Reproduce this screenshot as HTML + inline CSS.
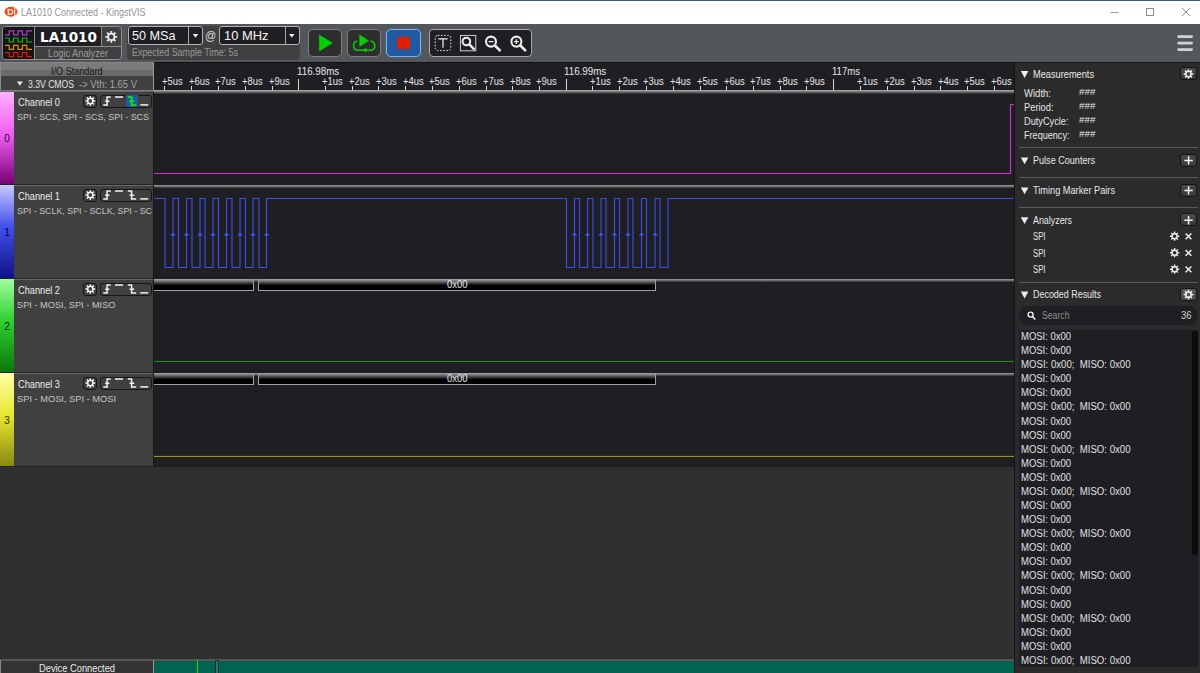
<!DOCTYPE html>
<html lang="en"><head><meta charset="utf-8"><title>LA1010 Connected - KingstVIS</title>
<style>
html,body{margin:0;padding:0;background:#303030;}
#app{position:relative;width:1200px;height:673px;overflow:hidden;background:#303030;}
.r{position:absolute;}
.t{position:absolute;white-space:pre;transform-origin:0 50%;}
#ov{position:absolute;left:0;top:0;width:1200px;height:673px;pointer-events:none;}
</style></head>
<body><div id="app">
<div class="r" style="left:0px;top:0px;width:1200px;height:24px;background:#ffffff;"></div>
<div class="r" style="left:0px;top:0px;width:1200px;height:1px;background:#315d86;"></div>
<span class="t" style="left:21.00px;top:6.20px;font:normal 10.4px/14px 'Liberation Sans', sans-serif;color:#949494;transform:scaleX(0.8655);">LA1010 Connected - KingstVIS</span>
<div class="r" style="left:0px;top:24px;width:1200px;height:38px;background:#53565a;"></div>
<div class="r" style="left:2px;top:26px;width:120px;height:34px;background:#404040;border:1px solid #8e8e8e;border-radius:4px;box-sizing:border-box;"></div>
<div class="r" style="left:3px;top:27px;width:31px;height:32px;background:#151515;border-radius:3px 0 0 3px;"></div>
<div class="r" style="left:35px;top:27px;width:66px;height:19px;background:#1f1e23;"></div>
<div class="r" style="left:34px;top:27px;width:1px;height:32px;background:#8e8e8e;"></div>
<div class="r" style="left:101px;top:27px;width:1px;height:19px;background:#8e8e8e;"></div>
<div class="r" style="left:35px;top:46px;width:86px;height:1px;background:#8e8e8e;"></div>
<span class="t" style="left:39.80px;top:28.20px;font:bold 13.8px/18px 'DejaVu Sans', sans-serif;color:#ffffff;transform:scaleX(0.9849);">LA1010</span>
<span class="t" style="left:48.00px;top:46.20px;font:normal 10.6px/14px 'Liberation Sans', sans-serif;color:#9c9c9c;transform:scaleX(0.8707);">Logic Analyzer</span>
<div class="r" style="left:127px;top:26px;width:173px;height:34px;background:#404040;border-radius:4px;"></div>
<div class="r" style="left:127.5px;top:26px;width:75.5px;height:18.5px;background:#1f1e23;border:1px solid #b2b2b2;border-radius:3px;box-sizing:border-box;"></div>
<div class="r" style="left:188px;top:27px;width:1px;height:16.5px;background:#a8a8a8;"></div>
<div class="r" style="left:219px;top:26px;width:81px;height:18.5px;background:#1f1e23;border:1px solid #b2b2b2;border-radius:3px;box-sizing:border-box;"></div>
<div class="r" style="left:285px;top:27px;width:1px;height:16.5px;background:#a8a8a8;"></div>
<span class="t" style="left:132.20px;top:27.70px;font:normal 12.2px/16px 'Liberation Sans', sans-serif;color:#f4f4f4;transform:scaleX(1.0353);">50 MSa</span>
<span class="t" style="left:224.00px;top:27.70px;font:normal 12.2px/16px 'Liberation Sans', sans-serif;color:#f4f4f4;transform:scaleX(1.0595);">10 MHz</span>
<span class="t" style="left:205.30px;top:27.60px;font:normal 12.6px/16px 'Liberation Sans', sans-serif;color:#d4d6de;transform:scaleX(0.8752);">@</span>
<span class="t" style="left:131.90px;top:46.40px;font:normal 10.3px/13px 'Liberation Sans', sans-serif;color:#9a9a9a;transform:scaleX(0.8654);">Expected Sample Time: 5s</span>
<div class="r" style="left:308px;top:29px;width:34px;height:28px;background:#2e2e2e;border:1px solid #7e7e7e;border-radius:5px;box-sizing:border-box;"></div>
<div class="r" style="left:347px;top:29px;width:34px;height:28px;background:#2e2e2e;border:1px solid #7e7e7e;border-radius:5px;box-sizing:border-box;"></div>
<div class="r" style="left:386px;top:29px;width:35px;height:28px;background:#1f5aa2;border:1px solid #8fb0d2;border-radius:5px;box-sizing:border-box;box-shadow:0 0 2px 1px rgba(50,120,190,.45);"></div>
<div class="r" style="left:397.3px;top:37.2px;width:12.7px;height:11.8px;background:#e02000;"></div>
<div class="r" style="left:429px;top:29px;width:103px;height:28px;background:#1f1e23;border:1px solid #a8a8a8;border-radius:4px;box-sizing:border-box;"></div>
<div class="r" style="left:0px;top:62px;width:1014px;height:598px;background:#303030;"></div>
<div class="r" style="left:154px;top:62px;width:860px;height:405px;background:#1f1e23;"></div>
<div class="r" style="left:0px;top:62px;width:154px;height:1px;background:#858585;"></div>
<div class="r" style="left:0px;top:63px;width:154px;height:7px;background:#7b7b7b;"></div>
<div class="r" style="left:0px;top:70px;width:154px;height:6px;background:#6b6b6b;"></div>
<div class="r" style="left:0px;top:76px;width:154px;height:15px;background:#404040;"></div>
<div class="r" style="left:0px;top:63px;width:1px;height:28px;background:#8a8a8a;"></div>
<div class="r" style="left:153px;top:63px;width:1px;height:28px;background:#9c9c9c;"></div>
<div class="r" style="left:0px;top:90px;width:154px;height:2px;background:;background:linear-gradient(#8a8a8a,#5a5a5a);"></div>
<span class="t" style="left:50.65px;top:64.80px;font:normal 10.0px/13px 'Liberation Sans', sans-serif;color:#161616;transform:scaleX(0.9082);">I/O Standard</span>
<span class="t" style="left:28.30px;top:77.80px;font:normal 10.0px/13px 'Liberation Sans', sans-serif;color:#e4e4e4;transform:scaleX(0.8621);">3.3V CMOS</span>
<span class="t" style="left:78.60px;top:77.80px;font:normal 10.0px/13px 'Liberation Sans', sans-serif;color:#a4a4a4;transform:scaleX(0.9440);">-&gt; Vth: 1.65 V</span>
<div class="r" style="left:164px;top:86px;width:1px;height:4.5px;background:#d8d8d8;"></div>
<span class="t" style="left:161.80px;top:74.80px;font:normal 10.0px/13px 'Liberation Sans', sans-serif;color:#e6e6e6;transform:scaleX(0.9468);">+5us</span>
<div class="r" style="left:191px;top:86px;width:1px;height:4.5px;background:#d8d8d8;"></div>
<span class="t" style="left:188.55px;top:74.80px;font:normal 10.0px/13px 'Liberation Sans', sans-serif;color:#e6e6e6;transform:scaleX(0.9468);">+6us</span>
<div class="r" style="left:218px;top:86px;width:1px;height:4.5px;background:#d8d8d8;"></div>
<span class="t" style="left:215.30px;top:74.80px;font:normal 10.0px/13px 'Liberation Sans', sans-serif;color:#e6e6e6;transform:scaleX(0.9468);">+7us</span>
<div class="r" style="left:245px;top:86px;width:1px;height:4.5px;background:#d8d8d8;"></div>
<span class="t" style="left:242.05px;top:74.80px;font:normal 10.0px/13px 'Liberation Sans', sans-serif;color:#e6e6e6;transform:scaleX(0.9468);">+8us</span>
<div class="r" style="left:272px;top:86px;width:1px;height:4.5px;background:#d8d8d8;"></div>
<span class="t" style="left:268.80px;top:74.80px;font:normal 10.0px/13px 'Liberation Sans', sans-serif;color:#e6e6e6;transform:scaleX(0.9468);">+9us</span>
<div class="r" style="left:298px;top:79px;width:1px;height:11.5px;background:#d8d8d8;"></div>
<div class="r" style="left:325px;top:86px;width:1px;height:4.5px;background:#d8d8d8;"></div>
<span class="t" style="left:322.30px;top:74.80px;font:normal 10.0px/13px 'Liberation Sans', sans-serif;color:#e6e6e6;transform:scaleX(0.9468);">+1us</span>
<div class="r" style="left:352px;top:86px;width:1px;height:4.5px;background:#d8d8d8;"></div>
<span class="t" style="left:349.05px;top:74.80px;font:normal 10.0px/13px 'Liberation Sans', sans-serif;color:#e6e6e6;transform:scaleX(0.9468);">+2us</span>
<div class="r" style="left:378px;top:86px;width:1px;height:4.5px;background:#d8d8d8;"></div>
<span class="t" style="left:375.80px;top:74.80px;font:normal 10.0px/13px 'Liberation Sans', sans-serif;color:#e6e6e6;transform:scaleX(0.9468);">+3us</span>
<div class="r" style="left:405px;top:86px;width:1px;height:4.5px;background:#d8d8d8;"></div>
<span class="t" style="left:402.55px;top:74.80px;font:normal 10.0px/13px 'Liberation Sans', sans-serif;color:#e6e6e6;transform:scaleX(0.9468);">+4us</span>
<div class="r" style="left:432px;top:86px;width:1px;height:4.5px;background:#d8d8d8;"></div>
<span class="t" style="left:429.30px;top:74.80px;font:normal 10.0px/13px 'Liberation Sans', sans-serif;color:#e6e6e6;transform:scaleX(0.9468);">+5us</span>
<div class="r" style="left:459px;top:86px;width:1px;height:4.5px;background:#d8d8d8;"></div>
<span class="t" style="left:456.05px;top:74.80px;font:normal 10.0px/13px 'Liberation Sans', sans-serif;color:#e6e6e6;transform:scaleX(0.9468);">+6us</span>
<div class="r" style="left:486px;top:86px;width:1px;height:4.5px;background:#d8d8d8;"></div>
<span class="t" style="left:482.80px;top:74.80px;font:normal 10.0px/13px 'Liberation Sans', sans-serif;color:#e6e6e6;transform:scaleX(0.9468);">+7us</span>
<div class="r" style="left:512px;top:86px;width:1px;height:4.5px;background:#d8d8d8;"></div>
<span class="t" style="left:509.55px;top:74.80px;font:normal 10.0px/13px 'Liberation Sans', sans-serif;color:#e6e6e6;transform:scaleX(0.9468);">+8us</span>
<div class="r" style="left:539px;top:86px;width:1px;height:4.5px;background:#d8d8d8;"></div>
<span class="t" style="left:536.30px;top:74.80px;font:normal 10.0px/13px 'Liberation Sans', sans-serif;color:#e6e6e6;transform:scaleX(0.9468);">+9us</span>
<div class="r" style="left:566px;top:79px;width:1px;height:11.5px;background:#d8d8d8;"></div>
<div class="r" style="left:592px;top:86px;width:1px;height:4.5px;background:#d8d8d8;"></div>
<span class="t" style="left:589.80px;top:74.80px;font:normal 10.0px/13px 'Liberation Sans', sans-serif;color:#e6e6e6;transform:scaleX(0.9468);">+1us</span>
<div class="r" style="left:619px;top:86px;width:1px;height:4.5px;background:#d8d8d8;"></div>
<span class="t" style="left:616.55px;top:74.80px;font:normal 10.0px/13px 'Liberation Sans', sans-serif;color:#e6e6e6;transform:scaleX(0.9468);">+2us</span>
<div class="r" style="left:646px;top:86px;width:1px;height:4.5px;background:#d8d8d8;"></div>
<span class="t" style="left:643.30px;top:74.80px;font:normal 10.0px/13px 'Liberation Sans', sans-serif;color:#e6e6e6;transform:scaleX(0.9468);">+3us</span>
<div class="r" style="left:673px;top:86px;width:1px;height:4.5px;background:#d8d8d8;"></div>
<span class="t" style="left:670.05px;top:74.80px;font:normal 10.0px/13px 'Liberation Sans', sans-serif;color:#e6e6e6;transform:scaleX(0.9468);">+4us</span>
<div class="r" style="left:700px;top:86px;width:1px;height:4.5px;background:#d8d8d8;"></div>
<span class="t" style="left:696.80px;top:74.80px;font:normal 10.0px/13px 'Liberation Sans', sans-serif;color:#e6e6e6;transform:scaleX(0.9468);">+5us</span>
<div class="r" style="left:726px;top:86px;width:1px;height:4.5px;background:#d8d8d8;"></div>
<span class="t" style="left:723.55px;top:74.80px;font:normal 10.0px/13px 'Liberation Sans', sans-serif;color:#e6e6e6;transform:scaleX(0.9468);">+6us</span>
<div class="r" style="left:753px;top:86px;width:1px;height:4.5px;background:#d8d8d8;"></div>
<span class="t" style="left:750.30px;top:74.80px;font:normal 10.0px/13px 'Liberation Sans', sans-serif;color:#e6e6e6;transform:scaleX(0.9468);">+7us</span>
<div class="r" style="left:780px;top:86px;width:1px;height:4.5px;background:#d8d8d8;"></div>
<span class="t" style="left:777.05px;top:74.80px;font:normal 10.0px/13px 'Liberation Sans', sans-serif;color:#e6e6e6;transform:scaleX(0.9468);">+8us</span>
<div class="r" style="left:806px;top:86px;width:1px;height:4.5px;background:#d8d8d8;"></div>
<span class="t" style="left:803.80px;top:74.80px;font:normal 10.0px/13px 'Liberation Sans', sans-serif;color:#e6e6e6;transform:scaleX(0.9468);">+9us</span>
<div class="r" style="left:833px;top:79px;width:1px;height:11.5px;background:#d8d8d8;"></div>
<div class="r" style="left:860px;top:86px;width:1px;height:4.5px;background:#d8d8d8;"></div>
<span class="t" style="left:857.30px;top:74.80px;font:normal 10.0px/13px 'Liberation Sans', sans-serif;color:#e6e6e6;transform:scaleX(0.9468);">+1us</span>
<div class="r" style="left:887px;top:86px;width:1px;height:4.5px;background:#d8d8d8;"></div>
<span class="t" style="left:884.05px;top:74.80px;font:normal 10.0px/13px 'Liberation Sans', sans-serif;color:#e6e6e6;transform:scaleX(0.9468);">+2us</span>
<div class="r" style="left:914px;top:86px;width:1px;height:4.5px;background:#d8d8d8;"></div>
<span class="t" style="left:910.80px;top:74.80px;font:normal 10.0px/13px 'Liberation Sans', sans-serif;color:#e6e6e6;transform:scaleX(0.9468);">+3us</span>
<div class="r" style="left:940px;top:86px;width:1px;height:4.5px;background:#d8d8d8;"></div>
<span class="t" style="left:937.55px;top:74.80px;font:normal 10.0px/13px 'Liberation Sans', sans-serif;color:#e6e6e6;transform:scaleX(0.9468);">+4us</span>
<div class="r" style="left:967px;top:86px;width:1px;height:4.5px;background:#d8d8d8;"></div>
<span class="t" style="left:964.30px;top:74.80px;font:normal 10.0px/13px 'Liberation Sans', sans-serif;color:#e6e6e6;transform:scaleX(0.9468);">+5us</span>
<div class="r" style="left:994px;top:86px;width:1px;height:4.5px;background:#d8d8d8;"></div>
<span class="t" style="left:991.05px;top:74.80px;font:normal 10.0px/13px 'Liberation Sans', sans-serif;color:#e6e6e6;transform:scaleX(0.9468);">+6us</span>
<span class="t" style="left:296.65px;top:65.00px;font:normal 10.0px/13px 'Liberation Sans', sans-serif;color:#e6e6e6;transform:scaleX(0.9771);">116.98ms</span>
<span class="t" style="left:564.15px;top:65.00px;font:normal 10.0px/13px 'Liberation Sans', sans-serif;color:#e6e6e6;transform:scaleX(0.9771);">116.99ms</span>
<span class="t" style="left:831.65px;top:65.00px;font:normal 10.0px/13px 'Liberation Sans', sans-serif;color:#e6e6e6;transform:scaleX(0.9562);">117ms</span>
<div class="r" style="left:154px;top:90px;width:860px;height:4px;background:;background:linear-gradient(#a8a8a8,#909090 30%,#4a4a4a 70%,#26252a);"></div>
<div class="r" style="left:154px;top:62px;width:860px;height:1px;background:#101013;"></div>
<div class="r" style="left:0px;top:92px;width:14px;height:92px;background:;background:linear-gradient(#ffb0ff,#f060f0 45%,#780078);"></div>
<div class="r" style="left:14px;top:92px;width:139px;height:92px;background:#404040;"></div>
<div class="r" style="left:153px;top:92px;width:1px;height:92px;background:#18181a;"></div>
<div class="r" style="left:0px;top:184px;width:154px;height:1px;background:#232323;"></div>
<span class="t" style="left:4.22px;top:132.30px;font:normal 10.0px/13px 'Liberation Sans', sans-serif;color:#3a003a;">0</span>
<span class="t" style="left:18.30px;top:95.90px;font:normal 10.0px/13px 'Liberation Sans', sans-serif;color:#ececec;transform:scaleX(0.9212);">Channel 0</span>
<span class="t" style="left:16.60px;top:110.70px;font:normal 9.5px/12px 'Liberation Sans', sans-serif;color:#c4c4c4;transform:scaleX(0.9400);">SPI - SCS, SPI - SCS, SPI - SCS</span>
<div class="r" style="left:83.3px;top:94.6px;width:13.7px;height:13.6px;background:#404040;border:1px solid #161616;border-radius:3px;box-sizing:border-box;"></div>
<div class="r" style="left:100px;top:94.6px;width:51.5px;height:13.6px;background:#404040;border:1px solid #161616;border-radius:3px;box-sizing:border-box;"></div>
<div class="r" style="left:125.5px;top:95.2px;width:12.5px;height:11.6px;background:#1f5aa2;"></div>
<div class="r" style="left:0px;top:185px;width:14px;height:93px;background:;background:linear-gradient(#c8c8ff,#4050e8 45%,#10108a);"></div>
<div class="r" style="left:14px;top:185px;width:139px;height:93px;background:#404040;"></div>
<div class="r" style="left:153px;top:185px;width:1px;height:93px;background:#18181a;"></div>
<div class="r" style="left:0px;top:278px;width:154px;height:1px;background:#232323;"></div>
<div class="r" style="left:14px;top:185px;width:139px;height:1px;background:#6a6a6a;"></div>
<span class="t" style="left:4.22px;top:226.30px;font:normal 10.0px/13px 'Liberation Sans', sans-serif;color:#000040;">1</span>
<span class="t" style="left:18.30px;top:189.90px;font:normal 10.0px/13px 'Liberation Sans', sans-serif;color:#ececec;transform:scaleX(0.9212);">Channel 1</span>
<span class="t" style="left:16.60px;top:204.70px;font:normal 9.5px/12px 'Liberation Sans', sans-serif;color:#c4c4c4;transform:scaleX(0.9332);">SPI - SCLK, SPI - SCLK, SPI - SC</span>
<div class="r" style="left:83.3px;top:188.6px;width:13.7px;height:13.6px;background:#404040;border:1px solid #161616;border-radius:3px;box-sizing:border-box;"></div>
<div class="r" style="left:100px;top:188.6px;width:51.5px;height:13.6px;background:#404040;border:1px solid #161616;border-radius:3px;box-sizing:border-box;"></div>
<div class="r" style="left:154px;top:185px;width:860px;height:3px;background:;background:linear-gradient(#9c9c9c,#6c6c6c 50%,#2c2c2c);"></div>
<div class="r" style="left:0px;top:279px;width:14px;height:93px;background:;background:linear-gradient(#a0ffa0,#30d030 45%,#0a780a);"></div>
<div class="r" style="left:14px;top:279px;width:139px;height:93px;background:#404040;"></div>
<div class="r" style="left:153px;top:279px;width:1px;height:93px;background:#18181a;"></div>
<div class="r" style="left:0px;top:372px;width:154px;height:1px;background:#232323;"></div>
<div class="r" style="left:14px;top:279px;width:139px;height:1px;background:#6a6a6a;"></div>
<span class="t" style="left:4.22px;top:320.30px;font:normal 10.0px/13px 'Liberation Sans', sans-serif;color:#003000;">2</span>
<span class="t" style="left:18.30px;top:283.90px;font:normal 10.0px/13px 'Liberation Sans', sans-serif;color:#ececec;transform:scaleX(0.9212);">Channel 2</span>
<span class="t" style="left:16.60px;top:298.70px;font:normal 9.5px/12px 'Liberation Sans', sans-serif;color:#c4c4c4;transform:scaleX(0.9718);">SPI - MOSI, SPI - MISO</span>
<div class="r" style="left:83.3px;top:282.6px;width:13.7px;height:13.6px;background:#404040;border:1px solid #161616;border-radius:3px;box-sizing:border-box;"></div>
<div class="r" style="left:100px;top:282.6px;width:51.5px;height:13.6px;background:#404040;border:1px solid #161616;border-radius:3px;box-sizing:border-box;"></div>
<div class="r" style="left:154px;top:279px;width:860px;height:3px;background:;background:linear-gradient(#9c9c9c,#6c6c6c 50%,#2c2c2c);"></div>
<div class="r" style="left:0px;top:373px;width:14px;height:93px;background:;background:linear-gradient(#ffffa8,#e8e830 45%,#8a8a10);"></div>
<div class="r" style="left:14px;top:373px;width:139px;height:93px;background:#404040;"></div>
<div class="r" style="left:153px;top:373px;width:1px;height:93px;background:#18181a;"></div>
<div class="r" style="left:0px;top:466px;width:154px;height:1px;background:#232323;"></div>
<div class="r" style="left:14px;top:373px;width:139px;height:1px;background:#6a6a6a;"></div>
<span class="t" style="left:4.22px;top:414.30px;font:normal 10.0px/13px 'Liberation Sans', sans-serif;color:#303000;">3</span>
<span class="t" style="left:18.30px;top:377.90px;font:normal 10.0px/13px 'Liberation Sans', sans-serif;color:#ececec;transform:scaleX(0.9212);">Channel 3</span>
<span class="t" style="left:16.60px;top:392.70px;font:normal 9.5px/12px 'Liberation Sans', sans-serif;color:#c4c4c4;transform:scaleX(0.9767);">SPI - MOSI, SPI - MOSI</span>
<div class="r" style="left:83.3px;top:376.6px;width:13.7px;height:13.6px;background:#404040;border:1px solid #161616;border-radius:3px;box-sizing:border-box;"></div>
<div class="r" style="left:100px;top:376.6px;width:51.5px;height:13.6px;background:#404040;border:1px solid #161616;border-radius:3px;box-sizing:border-box;"></div>
<div class="r" style="left:154px;top:373px;width:860px;height:3px;background:;background:linear-gradient(#9c9c9c,#6c6c6c 50%,#2c2c2c);"></div>
<div class="r" style="left:154px;top:279px;width:100px;height:12px;background:;background:linear-gradient(#a8a8a8,#787878 18%,#000 58%,#000);box-sizing:border-box;border-bottom:1px solid #a0a0a0;border-right:1px solid #a0a0a0;"></div>
<div class="r" style="left:258px;top:279px;width:398px;height:12px;background:;background:linear-gradient(#a8a8a8,#787878 18%,#000 58%,#000);box-sizing:border-box;border-bottom:1px solid #a0a0a0;border-right:1px solid #a0a0a0;border-left:1px solid #a0a0a0;"></div>
<span class="t" style="left:446.75px;top:278.40px;font:normal 10.0px/13px 'Liberation Sans', sans-serif;color:#ececec;transform:scaleX(0.9452);">0x00</span>
<div class="r" style="left:154px;top:373px;width:100px;height:12px;background:;background:linear-gradient(#a8a8a8,#787878 18%,#000 58%,#000);box-sizing:border-box;border-bottom:1px solid #a0a0a0;border-right:1px solid #a0a0a0;"></div>
<div class="r" style="left:258px;top:373px;width:398px;height:12px;background:;background:linear-gradient(#a8a8a8,#787878 18%,#000 58%,#000);box-sizing:border-box;border-bottom:1px solid #a0a0a0;border-right:1px solid #a0a0a0;border-left:1px solid #a0a0a0;"></div>
<span class="t" style="left:446.75px;top:372.40px;font:normal 10.0px/13px 'Liberation Sans', sans-serif;color:#ececec;transform:scaleX(0.9452);">0x00</span>
<div class="r" style="left:0px;top:659px;width:1014px;height:2px;background:;background:linear-gradient(#4a4a4a,#5e5e5e 50%,#505050);"></div>
<div class="r" style="left:0px;top:661px;width:154px;height:12px;background:#333333;"></div>
<div class="r" style="left:0px;top:660px;width:1px;height:13px;background:#8a8a8a;"></div>
<div class="r" style="left:153px;top:660px;width:1px;height:13px;background:#9a9a9a;"></div>
<div class="r" style="left:154px;top:661px;width:860px;height:12px;background:#006450;"></div>
<span class="t" style="left:39.00px;top:662.20px;font:normal 10.0px/13px 'Liberation Sans', sans-serif;color:#ececec;transform:scaleX(0.9300);">Device Connected</span>
<div class="r" style="left:197px;top:660px;width:1px;height:13px;background:#10e010;"></div>
<div class="r" style="left:215px;top:660px;width:4px;height:13px;background:#17352f;"></div>
<div class="r" style="left:216.4px;top:661px;width:1.3px;height:12px;background:#2f7566;"></div>
<div class="r" style="left:1014px;top:62px;width:186px;height:611px;background:#2b2b2b;"></div>
<div class="r" style="left:1014px;top:62px;width:1px;height:611px;background:#141414;"></div>
<div class="r" style="left:1014px;top:62px;width:186px;height:1px;background:#141414;"></div>
<span class="t" style="left:1033.00px;top:67.80px;font:normal 10.0px/13px 'Liberation Sans', sans-serif;color:#e8e8e8;transform:scaleX(0.9223);">Measurements</span>
<div class="r" style="left:1179.8px;top:67.1px;width:17.5px;height:13.2px;background:#3a3a3a;border:1px solid #141414;border-bottom-width:1.5px;border-radius:3px;box-sizing:border-box;background:linear-gradient(#4a4a4a,#383838);"></div>
<span class="t" style="left:1023.50px;top:86.70px;font:normal 10.0px/13px 'Liberation Sans', sans-serif;color:#e6e6e6;transform:scaleX(0.9526);">Width:</span>
<span class="t" style="left:1078.50px;top:85.60px;font:normal 9.6px/12px 'Liberation Sans', sans-serif;color:#e6e6e6;transform:scaleX(1.0302);">###</span>
<span class="t" style="left:1023.50px;top:100.95px;font:normal 10.0px/13px 'Liberation Sans', sans-serif;color:#e6e6e6;transform:scaleX(0.9310);">Period:</span>
<span class="t" style="left:1078.50px;top:99.85px;font:normal 9.6px/12px 'Liberation Sans', sans-serif;color:#e6e6e6;transform:scaleX(1.0302);">###</span>
<span class="t" style="left:1023.50px;top:115.20px;font:normal 10.0px/13px 'Liberation Sans', sans-serif;color:#e6e6e6;transform:scaleX(0.9202);">DutyCycle:</span>
<span class="t" style="left:1078.50px;top:114.10px;font:normal 9.6px/12px 'Liberation Sans', sans-serif;color:#e6e6e6;transform:scaleX(1.0302);">###</span>
<span class="t" style="left:1023.50px;top:129.45px;font:normal 10.0px/13px 'Liberation Sans', sans-serif;color:#e6e6e6;transform:scaleX(0.9094);">Frequency:</span>
<span class="t" style="left:1078.50px;top:128.35px;font:normal 9.6px/12px 'Liberation Sans', sans-serif;color:#e6e6e6;transform:scaleX(1.0302);">###</span>
<div class="r" style="left:1019px;top:146.8px;width:179px;height:1.3px;background:#565a5e;"></div>
<span class="t" style="left:1033.00px;top:154.20px;font:normal 10.0px/13px 'Liberation Sans', sans-serif;color:#e8e8e8;transform:scaleX(0.9068);">Pulse Counters</span>
<div class="r" style="left:1179.8px;top:153.5px;width:17.5px;height:13.2px;background:#3a3a3a;border:1px solid #141414;border-bottom-width:1.5px;border-radius:3px;box-sizing:border-box;background:linear-gradient(#4a4a4a,#383838);"></div>
<div class="r" style="left:1019px;top:176.8px;width:179px;height:1.3px;background:#565a5e;"></div>
<span class="t" style="left:1033.00px;top:184.20px;font:normal 10.0px/13px 'Liberation Sans', sans-serif;color:#e8e8e8;transform:scaleX(0.9204);">Timing Marker Pairs</span>
<div class="r" style="left:1179.8px;top:183.5px;width:17.5px;height:13.2px;background:#3a3a3a;border:1px solid #141414;border-bottom-width:1.5px;border-radius:3px;box-sizing:border-box;background:linear-gradient(#4a4a4a,#383838);"></div>
<div class="r" style="left:1019px;top:206.8px;width:179px;height:1.3px;background:#565a5e;"></div>
<span class="t" style="left:1033.00px;top:214.00px;font:normal 10.0px/13px 'Liberation Sans', sans-serif;color:#e8e8e8;transform:scaleX(0.8883);">Analyzers</span>
<div class="r" style="left:1179.8px;top:213.29999999999998px;width:17.5px;height:13.2px;background:#3a3a3a;border:1px solid #141414;border-bottom-width:1.5px;border-radius:3px;box-sizing:border-box;background:linear-gradient(#4a4a4a,#383838);"></div>
<span class="t" style="left:1033.00px;top:230.30px;font:normal 10.0px/13px 'Liberation Sans', sans-serif;color:#e6e6e6;transform:scaleX(0.7752);">SPI</span>
<span class="t" style="left:1033.00px;top:246.80px;font:normal 10.0px/13px 'Liberation Sans', sans-serif;color:#e6e6e6;transform:scaleX(0.7752);">SPI</span>
<span class="t" style="left:1033.00px;top:263.30px;font:normal 10.0px/13px 'Liberation Sans', sans-serif;color:#e6e6e6;transform:scaleX(0.7752);">SPI</span>
<div class="r" style="left:1019px;top:281.8px;width:179px;height:1.3px;background:#565a5e;"></div>
<span class="t" style="left:1033.00px;top:288.40px;font:normal 10.0px/13px 'Liberation Sans', sans-serif;color:#e8e8e8;transform:scaleX(0.8929);">Decoded Results</span>
<div class="r" style="left:1179.8px;top:287.70000000000005px;width:17.5px;height:13.2px;background:#3a3a3a;border:1px solid #141414;border-bottom-width:1.5px;border-radius:3px;box-sizing:border-box;background:linear-gradient(#5a5a5a,#484848);"></div>
<div class="r" style="left:1019px;top:306.2px;width:179px;height:18.8px;background:#1f1e23;border-radius:9.4px;"></div>
<span class="t" style="left:1041.50px;top:309.40px;font:normal 10.0px/13px 'Liberation Sans', sans-serif;color:#8c8c8c;transform:scaleX(0.8679);">Search</span>
<span class="t" style="left:1181.10px;top:309.00px;font:normal 10.0px/13px 'Liberation Sans', sans-serif;color:#d0d0d0;transform:scaleX(0.9438);">36</span>
<div class="r" style="left:1019px;top:330px;width:179px;height:337px;background:#1f1e23;"></div>
<span class="t" style="left:1021.30px;top:330.00px;font:normal 10.0px/13px 'Liberation Sans', sans-serif;color:#e2e2e2;transform:scaleX(0.9467);">MOSI: 0x00</span>
<span class="t" style="left:1021.30px;top:344.09px;font:normal 10.0px/13px 'Liberation Sans', sans-serif;color:#e2e2e2;transform:scaleX(0.9467);">MOSI: 0x00</span>
<span class="t" style="left:1021.30px;top:358.17px;font:normal 10.0px/13px 'Liberation Sans', sans-serif;color:#e2e2e2;transform:scaleX(0.9611);">MOSI: 0x00;  MISO: 0x00</span>
<span class="t" style="left:1021.30px;top:372.26px;font:normal 10.0px/13px 'Liberation Sans', sans-serif;color:#e2e2e2;transform:scaleX(0.9467);">MOSI: 0x00</span>
<span class="t" style="left:1021.30px;top:386.35px;font:normal 10.0px/13px 'Liberation Sans', sans-serif;color:#e2e2e2;transform:scaleX(0.9467);">MOSI: 0x00</span>
<span class="t" style="left:1021.30px;top:400.44px;font:normal 10.0px/13px 'Liberation Sans', sans-serif;color:#e2e2e2;transform:scaleX(0.9611);">MOSI: 0x00;  MISO: 0x00</span>
<span class="t" style="left:1021.30px;top:414.52px;font:normal 10.0px/13px 'Liberation Sans', sans-serif;color:#e2e2e2;transform:scaleX(0.9467);">MOSI: 0x00</span>
<span class="t" style="left:1021.30px;top:428.61px;font:normal 10.0px/13px 'Liberation Sans', sans-serif;color:#e2e2e2;transform:scaleX(0.9467);">MOSI: 0x00</span>
<span class="t" style="left:1021.30px;top:442.70px;font:normal 10.0px/13px 'Liberation Sans', sans-serif;color:#e2e2e2;transform:scaleX(0.9611);">MOSI: 0x00;  MISO: 0x00</span>
<span class="t" style="left:1021.30px;top:456.78px;font:normal 10.0px/13px 'Liberation Sans', sans-serif;color:#e2e2e2;transform:scaleX(0.9467);">MOSI: 0x00</span>
<span class="t" style="left:1021.30px;top:470.87px;font:normal 10.0px/13px 'Liberation Sans', sans-serif;color:#e2e2e2;transform:scaleX(0.9467);">MOSI: 0x00</span>
<span class="t" style="left:1021.30px;top:484.96px;font:normal 10.0px/13px 'Liberation Sans', sans-serif;color:#e2e2e2;transform:scaleX(0.9611);">MOSI: 0x00;  MISO: 0x00</span>
<span class="t" style="left:1021.30px;top:499.04px;font:normal 10.0px/13px 'Liberation Sans', sans-serif;color:#e2e2e2;transform:scaleX(0.9467);">MOSI: 0x00</span>
<span class="t" style="left:1021.30px;top:513.13px;font:normal 10.0px/13px 'Liberation Sans', sans-serif;color:#e2e2e2;transform:scaleX(0.9467);">MOSI: 0x00</span>
<span class="t" style="left:1021.30px;top:527.22px;font:normal 10.0px/13px 'Liberation Sans', sans-serif;color:#e2e2e2;transform:scaleX(0.9611);">MOSI: 0x00;  MISO: 0x00</span>
<span class="t" style="left:1021.30px;top:541.30px;font:normal 10.0px/13px 'Liberation Sans', sans-serif;color:#e2e2e2;transform:scaleX(0.9467);">MOSI: 0x00</span>
<span class="t" style="left:1021.30px;top:555.39px;font:normal 10.0px/13px 'Liberation Sans', sans-serif;color:#e2e2e2;transform:scaleX(0.9467);">MOSI: 0x00</span>
<span class="t" style="left:1021.30px;top:569.48px;font:normal 10.0px/13px 'Liberation Sans', sans-serif;color:#e2e2e2;transform:scaleX(0.9611);">MOSI: 0x00;  MISO: 0x00</span>
<span class="t" style="left:1021.30px;top:583.57px;font:normal 10.0px/13px 'Liberation Sans', sans-serif;color:#e2e2e2;transform:scaleX(0.9467);">MOSI: 0x00</span>
<span class="t" style="left:1021.30px;top:597.65px;font:normal 10.0px/13px 'Liberation Sans', sans-serif;color:#e2e2e2;transform:scaleX(0.9467);">MOSI: 0x00</span>
<span class="t" style="left:1021.30px;top:611.74px;font:normal 10.0px/13px 'Liberation Sans', sans-serif;color:#e2e2e2;transform:scaleX(0.9611);">MOSI: 0x00;  MISO: 0x00</span>
<span class="t" style="left:1021.30px;top:625.83px;font:normal 10.0px/13px 'Liberation Sans', sans-serif;color:#e2e2e2;transform:scaleX(0.9467);">MOSI: 0x00</span>
<span class="t" style="left:1021.30px;top:639.91px;font:normal 10.0px/13px 'Liberation Sans', sans-serif;color:#e2e2e2;transform:scaleX(0.9467);">MOSI: 0x00</span>
<span class="t" style="left:1021.30px;top:654.00px;font:normal 10.0px/13px 'Liberation Sans', sans-serif;color:#e2e2e2;transform:scaleX(0.9611);">MOSI: 0x00;  MISO: 0x00</span>
<div class="r" style="left:1192px;top:330.5px;width:5.5px;height:224px;background:#0b0b0b;border-radius:2.75px;"></div>
<svg id="ov" viewBox="0 0 1200 673" width="1200" height="673">
<ellipse cx="11" cy="11.8" rx="6.5" ry="5" fill="#fb4712"/>
<path d="M8.3 9.7 V14.1 H10.4 C13.5 14.1 13.5 9.7 10.4 9.7 H7.2" fill="none" stroke="#fff" stroke-width="1.15"/>
<path d="M14.75 6.5 V17.2" stroke="#fff" stroke-width="0.95"/>
<path d="M1110.5 12.5 H1118.5" stroke="#9c9c9c" stroke-width="1"/>
<rect x="1146.5" y="8.5" width="7" height="7" fill="none" stroke="#8c8c8c" stroke-width="1"/>
<path d="M1182 8 L1190 16 M1190 8 L1182 16" stroke="#8c8c8c" stroke-width="1" fill="none"/>
<path d="M5 34.8 H9.2 V30.799999999999997 H13.6 V34.8 H18 V30.799999999999997 H22.4 V34.8 H26.8 V30.799999999999997 H32" fill="none" stroke="#b43ad6" stroke-width="1.15"/>
<path d="M5 38.0 H9.2 V42.0 H13.6 V38.0 H18 V42.0 H22.4 V38.0 H26.8 V42.0 H32" fill="none" stroke="#12b312" stroke-width="1.15"/>
<path d="M5 45.3 H9.2 V49.3 H13.6 V45.3 H18 V49.3 H22.4 V45.3 H26.8 V49.3 H32" fill="none" stroke="#e88a10" stroke-width="1.15"/>
<path d="M5 52.6 H9.2 V56.6 H13.6 V52.6 H18 V56.6 H22.4 V52.6 H26.8 V56.6 H32" fill="none" stroke="#e01414" stroke-width="1.15"/>
<path d="M115.39 35.96 L117.24 36.02 L117.24 37.78 L115.39 37.84 L114.86 39.13 L116.12 40.47 L114.87 41.72 L113.53 40.46 L112.24 40.99 L112.18 42.84 L110.42 42.84 L110.36 40.99 L109.07 40.46 L107.73 41.72 L106.48 40.47 L107.74 39.13 L107.21 37.84 L105.36 37.78 L105.36 36.02 L107.21 35.96 L107.74 34.67 L106.48 33.33 L107.73 32.08 L109.07 33.34 L110.36 32.81 L110.42 30.96 L112.18 30.96 L112.24 32.81 L113.53 33.34 L114.87 32.08 L116.12 33.33 L114.86 34.67Z M113.58 36.90 A2.2800000000000002 2.2800000000000002 0 1 0 109.02 36.90 A2.2800000000000002 2.2800000000000002 0 1 0 113.58 36.90Z" fill="#e6e6e6" fill-rule="evenodd"/>
<path d="M192.8 34.0 H198.2 L195.5 37.7Z" fill="#ececec"/>
<path d="M289.1 34.0 H294.5 L291.8 37.7Z" fill="#ececec"/>
<path d="M319.4 35 L332.2 43 L319.4 51Z" fill="#05d005" stroke="#05d005" stroke-width="0.6" stroke-linejoin="round"/>
<path d="M359.6 35 L368.6 40.7 L359.6 46.4Z" fill="#05d005" stroke="#05d005" stroke-width="0.5" stroke-linejoin="round"/>
<path d="M357.3 41 C352.2 42.3 352.2 50.2 358.2 50.2 H370.2 C376.2 50.2 376.4 42.4 370.6 41" fill="none" stroke="#05d005" stroke-width="1.5"/>
<path d="M362.3 50.2 L366.3 47.8 V52.6Z" fill="#05d005"/>
<rect x="435.2" y="35.4" width="15.6" height="15.2" rx="2.5" fill="none" stroke="#e8e8e8" stroke-width="1" stroke-dasharray="1.6 1.6"/>
<path d="M438.4 38.9 H447.6 M443 38.9 V47.8" stroke="#f0f0f0" stroke-width="1.25" fill="none"/>
<rect x="460.4" y="35.4" width="15.4" height="15.4" fill="none" stroke="#e0e0e0" stroke-width="0.9"/>
<circle cx="466.4" cy="41.5" r="3.8" fill="none" stroke="#ececec" stroke-width="2.0"/>
<path d="M469.51 44.61 L473.8 48.9" stroke="#ececec" stroke-width="2.6" stroke-linecap="round"/>
<circle cx="491.0" cy="41.6" r="5.0" fill="none" stroke="#ececec" stroke-width="2.1"/>
<path d="M494.96 45.56 L499.8 50.4" stroke="#ececec" stroke-width="2.7" stroke-linecap="round"/>
<circle cx="516.4" cy="41.6" r="5.0" fill="none" stroke="#ececec" stroke-width="2.1"/>
<path d="M520.36 45.56 L525.2 50.4" stroke="#ececec" stroke-width="2.7" stroke-linecap="round"/>
<path d="M488.6 41.6 H493.4" stroke="#ececec" stroke-width="1.3"/>
<path d="M514 41.6 H518.8 M516.4 39.2 V44" stroke="#ececec" stroke-width="1.3"/>
<path d="M1178.6 36.6 H1191.6" stroke="#d2d2d2" stroke-width="2.7" stroke-linecap="round"/>
<path d="M1178.6 43.1 H1191.6" stroke="#d2d2d2" stroke-width="2.7" stroke-linecap="round"/>
<path d="M1178.6 49.6 H1191.6" stroke="#d2d2d2" stroke-width="2.7" stroke-linecap="round"/>
<path d="M17 81.4 H22.8 L19.9 85.8Z" fill="#ececec"/>
<path d="M93.64 100.23 L95.15 100.28 L95.15 101.72 L93.64 101.77 L93.21 102.82 L94.24 103.92 L93.22 104.94 L92.12 103.91 L91.07 104.34 L91.02 105.85 L89.58 105.85 L89.53 104.34 L88.48 103.91 L87.38 104.94 L86.36 103.92 L87.39 102.82 L86.96 101.77 L85.45 101.72 L85.45 100.28 L86.96 100.23 L87.39 99.18 L86.36 98.08 L87.38 97.06 L88.48 98.09 L89.53 97.66 L89.58 96.15 L91.02 96.15 L91.07 97.66 L92.12 98.09 L93.22 97.06 L94.24 98.08 L93.21 99.18Z M92.16 101.00 A1.862 1.862 0 1 0 88.44 101.00 A1.862 1.862 0 1 0 92.16 101.00Z" fill="#f4f4f4" fill-rule="evenodd"/>
<path d="M103.2 105.1 H107.1 V97.1 H110.8 M105.2 101.2 H109.4" fill="none" stroke="#f2f2f2" stroke-width="1.5"/>
<path d="M115 97.0 H123" stroke="#f2f2f2" stroke-width="1.5"/>
<path d="M127.8 97.1 H131.6 V105.1 H136.2 M129.6 101.2 H134.2" fill="none" stroke="#10e810" stroke-width="1.8"/>
<path d="M140.2 104.9 H148.2" stroke="#f2f2f2" stroke-width="1.5"/>
<path d="M93.64 194.23 L95.15 194.28 L95.15 195.72 L93.64 195.77 L93.21 196.82 L94.24 197.92 L93.22 198.94 L92.12 197.91 L91.07 198.34 L91.02 199.85 L89.58 199.85 L89.53 198.34 L88.48 197.91 L87.38 198.94 L86.36 197.92 L87.39 196.82 L86.96 195.77 L85.45 195.72 L85.45 194.28 L86.96 194.23 L87.39 193.18 L86.36 192.08 L87.38 191.06 L88.48 192.09 L89.53 191.66 L89.58 190.15 L91.02 190.15 L91.07 191.66 L92.12 192.09 L93.22 191.06 L94.24 192.08 L93.21 193.18Z M92.16 195.00 A1.862 1.862 0 1 0 88.44 195.00 A1.862 1.862 0 1 0 92.16 195.00Z" fill="#f4f4f4" fill-rule="evenodd"/>
<path d="M103.2 199.1 H107.1 V191.1 H110.8 M105.2 195.2 H109.4" fill="none" stroke="#f2f2f2" stroke-width="1.5"/>
<path d="M115 191.0 H123" stroke="#f2f2f2" stroke-width="1.5"/>
<path d="M127.8 191.1 H131.6 V199.1 H136.2 M129.6 195.2 H134.2" fill="none" stroke="#f2f2f2" stroke-width="1.5"/>
<path d="M140.2 198.9 H148.2" stroke="#f2f2f2" stroke-width="1.5"/>
<path d="M93.64 288.23 L95.15 288.28 L95.15 289.72 L93.64 289.77 L93.21 290.82 L94.24 291.92 L93.22 292.94 L92.12 291.91 L91.07 292.34 L91.02 293.85 L89.58 293.85 L89.53 292.34 L88.48 291.91 L87.38 292.94 L86.36 291.92 L87.39 290.82 L86.96 289.77 L85.45 289.72 L85.45 288.28 L86.96 288.23 L87.39 287.18 L86.36 286.08 L87.38 285.06 L88.48 286.09 L89.53 285.66 L89.58 284.15 L91.02 284.15 L91.07 285.66 L92.12 286.09 L93.22 285.06 L94.24 286.08 L93.21 287.18Z M92.16 289.00 A1.862 1.862 0 1 0 88.44 289.00 A1.862 1.862 0 1 0 92.16 289.00Z" fill="#f4f4f4" fill-rule="evenodd"/>
<path d="M103.2 293.1 H107.1 V285.1 H110.8 M105.2 289.2 H109.4" fill="none" stroke="#f2f2f2" stroke-width="1.5"/>
<path d="M115 285.0 H123" stroke="#f2f2f2" stroke-width="1.5"/>
<path d="M127.8 285.1 H131.6 V293.1 H136.2 M129.6 289.2 H134.2" fill="none" stroke="#f2f2f2" stroke-width="1.5"/>
<path d="M140.2 292.9 H148.2" stroke="#f2f2f2" stroke-width="1.5"/>
<path d="M93.64 382.23 L95.15 382.28 L95.15 383.72 L93.64 383.77 L93.21 384.82 L94.24 385.92 L93.22 386.94 L92.12 385.91 L91.07 386.34 L91.02 387.85 L89.58 387.85 L89.53 386.34 L88.48 385.91 L87.38 386.94 L86.36 385.92 L87.39 384.82 L86.96 383.77 L85.45 383.72 L85.45 382.28 L86.96 382.23 L87.39 381.18 L86.36 380.08 L87.38 379.06 L88.48 380.09 L89.53 379.66 L89.58 378.15 L91.02 378.15 L91.07 379.66 L92.12 380.09 L93.22 379.06 L94.24 380.08 L93.21 381.18Z M92.16 383.00 A1.862 1.862 0 1 0 88.44 383.00 A1.862 1.862 0 1 0 92.16 383.00Z" fill="#f4f4f4" fill-rule="evenodd"/>
<path d="M103.2 387.1 H107.1 V379.1 H110.8 M105.2 383.2 H109.4" fill="none" stroke="#f2f2f2" stroke-width="1.5"/>
<path d="M115 379.0 H123" stroke="#f2f2f2" stroke-width="1.5"/>
<path d="M127.8 379.1 H131.6 V387.1 H136.2 M129.6 383.2 H134.2" fill="none" stroke="#f2f2f2" stroke-width="1.5"/>
<path d="M140.2 386.9 H148.2" stroke="#f2f2f2" stroke-width="1.5"/>
<path d="M154 173.5 H1010.5 V104.5 H1014" fill="none" stroke="#d030d0" stroke-width="1.1"/>
<path d="M154 198.5 H165.0 V267.5 H173.0 V198.5 H178.5 V267.5 H186.5 V198.5 H192.0 V267.5 H200.0 V198.5 H205.0 V267.5 H213.0 V198.5 H218.5 V267.5 H226.5 V198.5 H232.0 V267.5 H240.0 V198.5 H245.5 V267.5 H253.0 V198.5 H259.0 V267.5 H266.5 V198.5 H566.5 V267.5 H574.5 V198.5 H579.5 V267.5 H587.5 V198.5 H593.0 V267.5 H601.0 V198.5 H606.0 V267.5 H614.5 V198.5 H619.5 V267.5 H628.0 V198.5 H633.0 V267.5 H641.5 V198.5 H646.5 V267.5 H655.0 V198.5 H660.0 V267.5 H668.0 V198.5 H1014" fill="none" stroke="#3a50e6" stroke-width="1.1"/>
<path d="M170.2 235.6 L173.0 232.6 L175.8 235.6Z" fill="#3c5cff"/>
<path d="M183.7 235.6 L186.5 232.6 L189.3 235.6Z" fill="#3c5cff"/>
<path d="M197.2 235.6 L200.0 232.6 L202.8 235.6Z" fill="#3c5cff"/>
<path d="M210.2 235.6 L213.0 232.6 L215.8 235.6Z" fill="#3c5cff"/>
<path d="M223.7 235.6 L226.5 232.6 L229.3 235.6Z" fill="#3c5cff"/>
<path d="M237.2 235.6 L240.0 232.6 L242.8 235.6Z" fill="#3c5cff"/>
<path d="M250.2 235.6 L253.0 232.6 L255.8 235.6Z" fill="#3c5cff"/>
<path d="M263.7 235.6 L266.5 232.6 L269.3 235.6Z" fill="#3c5cff"/>
<path d="M571.7 235.6 L574.5 232.6 L577.3 235.6Z" fill="#3c5cff"/>
<path d="M584.7 235.6 L587.5 232.6 L590.3 235.6Z" fill="#3c5cff"/>
<path d="M598.2 235.6 L601.0 232.6 L603.8 235.6Z" fill="#3c5cff"/>
<path d="M611.7 235.6 L614.5 232.6 L617.3 235.6Z" fill="#3c5cff"/>
<path d="M625.2 235.6 L628.0 232.6 L630.8 235.6Z" fill="#3c5cff"/>
<path d="M638.7 235.6 L641.5 232.6 L644.3 235.6Z" fill="#3c5cff"/>
<path d="M652.2 235.6 L655.0 232.6 L657.8 235.6Z" fill="#3c5cff"/>
<path d="M154 361.5 H1014" stroke="#2a8a2a" stroke-width="1.1"/>
<path d="M154 456.4 H1014" stroke="#a8a020" stroke-width="1"/>
<path d="M1020.8 71.0 H1028.4 L1024.6 77.9Z" fill="#ececec"/>
<path d="M1191.84 73.23 L1193.35 73.28 L1193.35 74.72 L1191.84 74.77 L1191.41 75.82 L1192.44 76.92 L1191.42 77.94 L1190.32 76.91 L1189.27 77.34 L1189.22 78.85 L1187.78 78.85 L1187.73 77.34 L1186.68 76.91 L1185.58 77.94 L1184.56 76.92 L1185.59 75.82 L1185.16 74.77 L1183.65 74.72 L1183.65 73.28 L1185.16 73.23 L1185.59 72.18 L1184.56 71.08 L1185.58 70.06 L1186.68 71.09 L1187.73 70.66 L1187.78 69.15 L1189.22 69.15 L1189.27 70.66 L1190.32 71.09 L1191.42 70.06 L1192.44 71.08 L1191.41 72.18Z M1190.36 74.00 A1.862 1.862 0 1 0 1186.64 74.00 A1.862 1.862 0 1 0 1190.36 74.00Z" fill="#f4f4f4" fill-rule="evenodd"/>
<path d="M1020.8 157.4 H1028.4 L1024.6 164.3Z" fill="#ececec"/>
<path d="M1184.4 160.4 H1192.8 M1188.6 156.20000000000002 V164.6" stroke="#f4f4f4" stroke-width="1.5"/>
<path d="M1020.8 187.4 H1028.4 L1024.6 194.3Z" fill="#ececec"/>
<path d="M1184.4 190.4 H1192.8 M1188.6 186.20000000000002 V194.6" stroke="#f4f4f4" stroke-width="1.5"/>
<path d="M1020.8 217.2 H1028.4 L1024.6 224.1Z" fill="#ececec"/>
<path d="M1184.4 220.2 H1192.8 M1188.6 216.0 V224.39999999999998" stroke="#f4f4f4" stroke-width="1.5"/>
<path d="M1177.81 235.46 L1179.25 235.51 L1179.25 236.89 L1177.81 236.94 L1177.39 237.95 L1178.38 239.00 L1177.40 239.98 L1176.35 238.99 L1175.34 239.41 L1175.29 240.85 L1173.91 240.85 L1173.86 239.41 L1172.85 238.99 L1171.80 239.98 L1170.82 239.00 L1171.81 237.95 L1171.39 236.94 L1169.95 236.89 L1169.95 235.51 L1171.39 235.46 L1171.81 234.45 L1170.82 233.40 L1171.80 232.42 L1172.85 233.41 L1173.86 232.99 L1173.91 231.55 L1175.29 231.55 L1175.34 232.99 L1176.35 233.41 L1177.40 232.42 L1178.38 233.40 L1177.39 234.45Z M1176.39 236.20 A1.786 1.786 0 1 0 1172.81 236.20 A1.786 1.786 0 1 0 1176.39 236.20Z" fill="#ececec" fill-rule="evenodd"/>
<path d="M1185.6 233.5 L1191.4 239.3 M1191.4 233.5 L1185.6 239.3" stroke="#ececec" stroke-width="1.5"/>
<path d="M1177.81 251.96 L1179.25 252.01 L1179.25 253.39 L1177.81 253.44 L1177.39 254.45 L1178.38 255.50 L1177.40 256.48 L1176.35 255.49 L1175.34 255.91 L1175.29 257.35 L1173.91 257.35 L1173.86 255.91 L1172.85 255.49 L1171.80 256.48 L1170.82 255.50 L1171.81 254.45 L1171.39 253.44 L1169.95 253.39 L1169.95 252.01 L1171.39 251.96 L1171.81 250.95 L1170.82 249.90 L1171.80 248.92 L1172.85 249.91 L1173.86 249.49 L1173.91 248.05 L1175.29 248.05 L1175.34 249.49 L1176.35 249.91 L1177.40 248.92 L1178.38 249.90 L1177.39 250.95Z M1176.39 252.70 A1.786 1.786 0 1 0 1172.81 252.70 A1.786 1.786 0 1 0 1176.39 252.70Z" fill="#ececec" fill-rule="evenodd"/>
<path d="M1185.6 250.0 L1191.4 255.8 M1191.4 250.0 L1185.6 255.8" stroke="#ececec" stroke-width="1.5"/>
<path d="M1177.81 268.46 L1179.25 268.51 L1179.25 269.89 L1177.81 269.94 L1177.39 270.95 L1178.38 272.00 L1177.40 272.98 L1176.35 271.99 L1175.34 272.41 L1175.29 273.85 L1173.91 273.85 L1173.86 272.41 L1172.85 271.99 L1171.80 272.98 L1170.82 272.00 L1171.81 270.95 L1171.39 269.94 L1169.95 269.89 L1169.95 268.51 L1171.39 268.46 L1171.81 267.45 L1170.82 266.40 L1171.80 265.42 L1172.85 266.41 L1173.86 265.99 L1173.91 264.55 L1175.29 264.55 L1175.34 265.99 L1176.35 266.41 L1177.40 265.42 L1178.38 266.40 L1177.39 267.45Z M1176.39 269.20 A1.786 1.786 0 1 0 1172.81 269.20 A1.786 1.786 0 1 0 1176.39 269.20Z" fill="#ececec" fill-rule="evenodd"/>
<path d="M1185.6 266.5 L1191.4 272.3 M1191.4 266.5 L1185.6 272.3" stroke="#ececec" stroke-width="1.5"/>
<path d="M1020.8 291.6 H1028.4 L1024.6 298.5Z" fill="#ececec"/>
<path d="M1191.84 293.83 L1193.35 293.88 L1193.35 295.32 L1191.84 295.37 L1191.41 296.42 L1192.44 297.52 L1191.42 298.54 L1190.32 297.51 L1189.27 297.94 L1189.22 299.45 L1187.78 299.45 L1187.73 297.94 L1186.68 297.51 L1185.58 298.54 L1184.56 297.52 L1185.59 296.42 L1185.16 295.37 L1183.65 295.32 L1183.65 293.88 L1185.16 293.83 L1185.59 292.78 L1184.56 291.68 L1185.58 290.66 L1186.68 291.69 L1187.73 291.26 L1187.78 289.75 L1189.22 289.75 L1189.27 291.26 L1190.32 291.69 L1191.42 290.66 L1192.44 291.68 L1191.41 292.78Z M1190.36 294.60 A1.862 1.862 0 1 0 1186.64 294.60 A1.862 1.862 0 1 0 1190.36 294.60Z" fill="#f4f4f4" fill-rule="evenodd"/>
<circle cx="1030.6" cy="314.6" r="2.5" fill="none" stroke="#ececec" stroke-width="1.4"/><path d="M1032.6 316.7 L1034.8 319" stroke="#ececec" stroke-width="1.7" stroke-linecap="round"/>
</svg>
</div></body></html>
